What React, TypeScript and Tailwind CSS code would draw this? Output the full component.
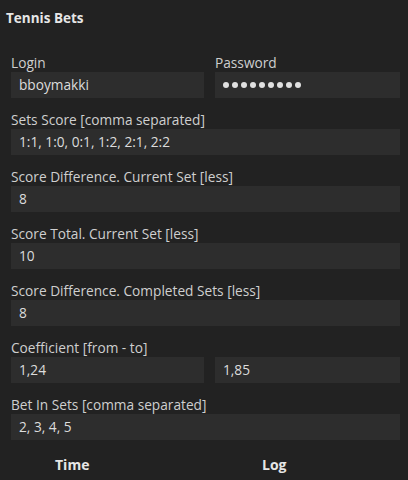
import React from 'react';

const font = { fontFamily: '"Open Sans", "Noto Sans", sans-serif' };

function Field({ label, value }: { label: string; value: string }) {
  return (
    <div className="flex flex-col">
      <div className="h-[19px] text-[13.7px] leading-[19px] text-[#cfcfcf]">{label}</div>
      <div className="h-[26px] bg-[#2d2d2d] pl-[8px] text-[13.7px] leading-[26px] text-[#dcdcdc]">{value}</div>
    </div>
  );
}

export default function App() {
  return (
    <div className="w-[408px] h-[480px] bg-[#222222] overflow-hidden" style={font}>
      <div className="pl-[6px] pt-[9px] h-[53px] text-[13.5px] font-bold leading-[18px] text-[#e6e6e6]">Tennis Bets</div>

      <div className="flex flex-col gap-[12px] pl-[11px] pr-[8px]">
        <div className="flex gap-[11px]">
          <div className="w-[193px]">
            <Field label="Login" value="bboymakki" />
          </div>
          <div className="flex-1 flex flex-col">
            <div className="h-[19px] text-[13.7px] leading-[19px] text-[#cfcfcf]">Password</div>
            <div className="h-[26px] bg-[#2d2d2d] pl-[8px] flex items-center gap-[3px]">
              {Array.from({ length: 9 }).map((_, i) => (
                <span key={i} className="w-[6px] h-[6px] rounded-full bg-[#e0e0e0]" />
              ))}
            </div>
          </div>
        </div>

        <Field label="Sets Score [comma separated]" value="1:1, 1:0, 0:1, 1:2, 2:1, 2:2" />
        <Field label="Score Difference. Current Set [less]" value="8" />
        <Field label="Score Total. Current Set [less]" value="10" />
        <Field label="Score Difference. Completed Sets [less]" value="8" />

        <div className="flex flex-col">
          <div className="h-[19px] text-[13.7px] leading-[19px] text-[#cfcfcf]">Coefficient [from - to]</div>
          <div className="flex gap-[11px]">
            <div className="w-[193px] h-[26px] bg-[#2d2d2d] pl-[8px] text-[13.7px] leading-[26px] text-[#dcdcdc]">1,24</div>
            <div className="flex-1 h-[26px] bg-[#2d2d2d] pl-[8px] text-[13.7px] leading-[26px] text-[#dcdcdc]">1,85</div>
          </div>
        </div>

        <Field label="Bet In Sets [comma separated]" value="2, 3, 4, 5" />
      </div>

      <div className="mt-[16px] flex text-[14px] font-bold leading-[18px] text-[#e6e6e6]">
        <div className="pl-[55px] w-[262px]">Time</div>
        <div>Log</div>
      </div>
    </div>
  );
}
